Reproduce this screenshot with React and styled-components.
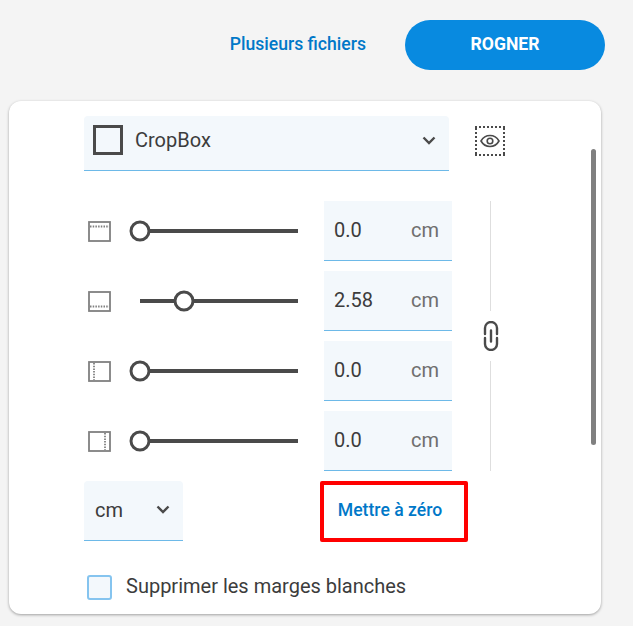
import styled, { createGlobalStyle } from 'styled-components';

const GlobalStyle = createGlobalStyle`
  html, body { margin: 0; padding: 0; background: #f4f4f4; }
  body { font-family: Roboto, "Liberation Sans", sans-serif; width: 633px; height: 626px; overflow: hidden; }
`;

const Page = styled.div`
  width: 633px;
  height: 626px;
  padding: 20px 32px 0 9px;
  box-sizing: border-box;
`;

const TopBar = styled.div`
  display: flex;
  justify-content: flex-end;
  align-items: center;
  height: 50px;
  margin-right: -4px;
  margin-bottom: 31px;
`;

const TopLink = styled.a`
  font-size: 17.6px;
  font-weight: 500;
  color: #0078c8;
  margin-right: 39px;
  margin-top: -2px;
`;

const CropButton = styled.button`
  width: 200px;
  height: 50px;
  padding: 0 0 2px;
  border: 0;
  border-radius: 25px;
  background: #088ae0;
  color: #fff;
  font: 700 17.6px Roboto, sans-serif;
`;

const Card = styled.div`
  position: relative;
  width: 592px;
  height: 513px;
  box-sizing: border-box;
  padding: 15px 0 0 75px;
  background: #fff;
  border-radius: 12px;
  box-shadow: 0 1px 3px rgba(0, 0, 0, 0.35);
`;

const Scrollbar = styled.div`
  position: absolute;
  left: 582px;
  top: 48px;
  width: 5px;
  height: 296px;
  border-radius: 3px;
  background: #808080;
`;

const SelectRow = styled.div`
  display: flex;
  align-items: center;
  gap: 26px;
  margin-bottom: 30px;
`;

const Select = styled.div`
  display: flex;
  align-items: center;
  width: ${p => p.$width}px;
  height: ${p => p.$height}px;
  box-sizing: border-box;
  padding: 0 ${p => p.$padRight}px ${p => p.$padBottom}px ${p => p.$padLeft}px;
  background: #f3f8fc;
  border-bottom: 1px solid #6db9e8;
  border-radius: 4px 4px 0 0;
  color: #3c3c3c;
  font-size: 20px;
`;

const SelectLabel = styled.span`
  flex: 1;
`;

const BoxSwatch = styled.span`
  width: 30px;
  height: 30px;
  box-sizing: border-box;
  border: 3px solid #4a4a4a;
  margin-right: 12px;
`;

const PreviewIcon = styled.svg`
  width: 30px;
  height: 30px;
  margin-top: -5px;
`;

const Controls = styled.div`
  display: flex;
  align-items: stretch;
`;

const Rows = styled.div`
  display: flex;
  flex-direction: column;
  gap: 10px;
`;

const Row = styled.div`
  display: flex;
  align-items: center;
  height: 60px;
`;

const EdgeIcon = styled.svg`
  width: 23px;
  height: 21px;
  margin: 0 29px 0 4px;
  flex: none;
`;

const Slider = styled.div`
  position: relative;
  width: 158px;
  height: 4px;
  background: #4a4a4a;
  margin-right: 26px;
`;

const Thumb = styled.span`
  position: absolute;
  top: 2px;
  width: 21px;
  height: 21px;
  box-sizing: border-box;
  border: 3px solid #4a4a4a;
  border-radius: 50%;
  background: #fff;
  transform: translate(-50%, -50%);
`;

const Field = styled.div`
  display: flex;
  align-items: center;
  justify-content: space-between;
  width: 128px;
  height: 60px;
  box-sizing: border-box;
  padding: 0 13px 2px 10px;
  background: #f3f8fc;
  border-bottom: 1px solid #6db9e8;
  font-size: 20px;
  color: #3c3c3c;
`;

const Unit = styled.span`
  color: #6f6f6f;
`;

const LinkColumn = styled.div`
  display: flex;
  flex-direction: column;
  align-items: center;
  width: 77px;
`;

const Rule = styled.div`
  flex: 1;
  width: 1px;
  background: #dedede;
`;

const LinkIcon = styled.svg`
  width: 20px;
  height: 30px;
  margin: 10px 0;
`;

const BottomRow = styled.div`
  display: flex;
  align-items: flex-start;
  margin-top: 10px;
  height: 61px;
`;

const ResetBox = styled.div`
  display: flex;
  align-items: center;
  justify-content: center;
  width: 148px;
  height: 61px;
  box-sizing: border-box;
  margin-left: 137px;
  padding: 0 8px 3px 0;
  border: 4px solid #f00;
  border-radius: 2px;
  font-size: 17.6px;
  font-weight: 500;
  color: #0078c8;
`;

const CheckRow = styled.label`
  display: flex;
  align-items: center;
  gap: 14px;
  margin: 32px 0 0 3px;
  font-size: 20px;
  color: #3c3c3c;
`;

const CheckBox = styled.span`
  width: 25px;
  height: 25px;
  box-sizing: border-box;
  border: 2px solid #85c4ef;
  border-radius: 3px;
  background: #f3f8fc;
`;

const CheckLabel = styled.span`
  padding-bottom: 3px;
`;

const Chevron = () => (
  <svg width="14" height="9" viewBox="0 0 14 9" fill="none">
    <path d="M1.500 1.500 7 7l5.500-5.500" stroke="#4a4a4a" strokeWidth="2.400" />
  </svg>
);

const edgeLines = {
  top: 'M2 5.500H21',
  bottom: 'M2 15.500H21',
  left: 'M6 2V19',
  right: 'M17 2V19',
};

const rows = [
  { edge: 'top', thumb: 0, value: '0.0' },
  { edge: 'bottom', thumb: 44, value: '2.58' },
  { edge: 'left', thumb: 0, value: '0.0' },
  { edge: 'right', thumb: 0, value: '0.0' },
];

const App = () => (
  <>
    <GlobalStyle />
    <Page>
      <TopBar>
        <TopLink>Plusieurs fichiers</TopLink>
        <CropButton>ROGNER</CropButton>
      </TopBar>
      <Card>
        <Scrollbar />
        <SelectRow>
          <Select $width={365} $height={55} $padLeft={9} $padRight={13} $padBottom={6}>
            <BoxSwatch />
            <SelectLabel>CropBox</SelectLabel>
            <Chevron />
          </Select>
          <PreviewIcon viewBox="0 0 30 30" fill="none">
            <path d="M0 1H30M0 29H30M1 2V28M29 2V28" stroke="#4a4a4a" strokeWidth="2" strokeDasharray="2 2" />
            <path d="M6 15C8 11.500 11 9.500 15 9.500S22 11.500 24 15C22 18.500 19 20.500 15 20.500S8 18.500 6 15Z" stroke="#4a4a4a" strokeWidth="1.600" />
            <circle cx="15" cy="15" r="2.800" stroke="#4a4a4a" strokeWidth="1.600" />
          </PreviewIcon>
        </SelectRow>
        <Controls>
          <Rows>
            {rows.map(row => (
              <Row key={row.edge}>
                <EdgeIcon viewBox="0 0 23 21" fill="none">
                  <rect x="1" y="1" width="21" height="19" stroke="#808080" strokeWidth="1.800" />
                  <path d={edgeLines[row.edge]} stroke="#808080" strokeWidth="1.800" strokeDasharray="1.500 1.200" />
                </EdgeIcon>
                <Slider>
                  <Thumb style={{ left: row.thumb }} />
                </Slider>
                <Field>
                  <span>{row.value}</span>
                  <Unit>cm</Unit>
                </Field>
              </Row>
            ))}
          </Rows>
          <LinkColumn>
            <Rule />
            <LinkIcon viewBox="0 0 20 30" fill="none">
              <path d="M4 13V7a6 6 0 0 1 12 0V13M4 17v6a6 6 0 0 0 12 0V17M10 9.500v11" stroke="#4a4a4a" strokeWidth="2.400" strokeLinecap="round" />
            </LinkIcon>
            <Rule />
          </LinkColumn>
        </Controls>
        <BottomRow>
          <Select $width={99} $height={60} $padLeft={11} $padRight={13} $padBottom={2}>
            <SelectLabel>cm</SelectLabel>
            <Chevron />
          </Select>
          <ResetBox>Mettre à zéro</ResetBox>
        </BottomRow>
        <CheckRow>
          <CheckBox />
          <CheckLabel>Supprimer les marges blanches</CheckLabel>
        </CheckRow>
      </Card>
    </Page>
  </>
);

export default App;
